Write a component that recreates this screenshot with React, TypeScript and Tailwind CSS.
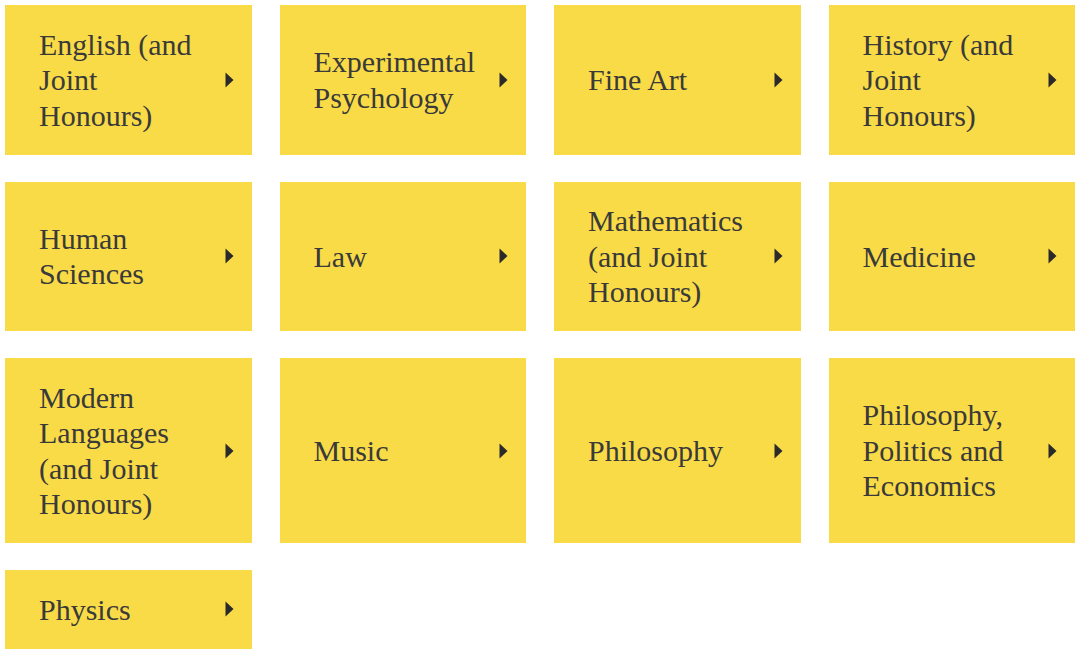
import React from "react";

const SUBJECTS = [
  "English (and Joint Honours)",
  "Experimental Psychology",
  "Fine Art",
  "History (and Joint Honours)",
  "Human Sciences",
  "Law",
  "Mathematics (and Joint Honours)",
  "Medicine",
  "Modern Languages (and Joint Honours)",
  "Music",
  "Philosophy",
  "Philosophy, Politics and Economics",
  "Physics",
];

const Arrow = () => (
  <svg width="9" height="16" viewBox="0 0 9 16" className="shrink-0">
    <path d="M0.5 0.5 L8.5 8 L0.5 15.5 Z" fill="#2a2a2a" />
  </svg>
);

const SubjectCard = ({ name }: { name: string }) => (
  <a
    href="#"
    className="flex items-center justify-between bg-[#f9db47] pl-[34px] pr-[18px] py-[21.5px]"
  >
    <span className="w-[172px] text-[30px] leading-[35.5px] text-[#3a3a3a] [font-family:'Liberation_Serif',serif]">
      {name}
    </span>
    <Arrow />
  </a>
);

export default function App() {
  return (
    <div className="min-h-screen bg-white pl-[5px] pt-[5px]">
      <div className="grid w-[1070px] grid-cols-4 gap-x-[28px] gap-y-[27px]">
        {SUBJECTS.map((s) => (
          <SubjectCard key={s} name={s} />
        ))}
      </div>
    </div>
  );
}
